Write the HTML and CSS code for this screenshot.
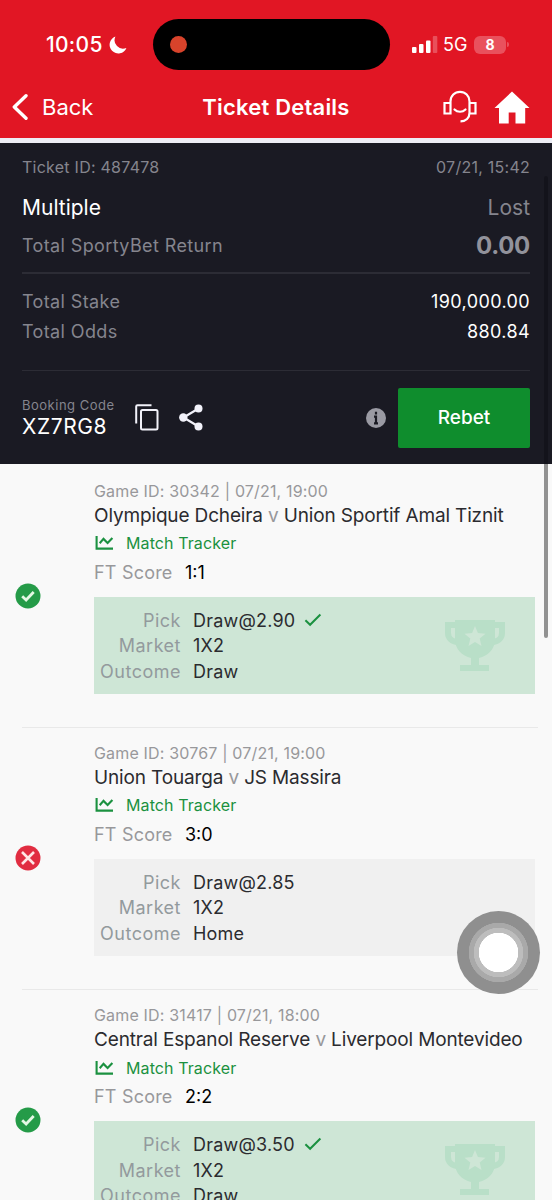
FILE: index.html
```html
<!DOCTYPE html>
<html lang="en">
<head>
<meta charset="utf-8">
<title>Ticket Details</title>
<link rel="stylesheet" href="styles.css">
</head>
<body>
<svg class="defs" aria-hidden="true">
  <symbol id="chart" viewBox="0 0 20 16"><path d="M2.600 1v12.600H19M5.700 8.200l3.800-4.300 4.100 4.200 4.800-5" fill="none" stroke="currentColor" stroke-width="2.100"/></symbol>
  <symbol id="won" viewBox="0 0 26 26"><circle cx="13" cy="13" r="12.5" fill="#259b48"/><path d="M7.200 13.200l3.900 3.800 7.600-8" fill="none" stroke="#e4f8e4" stroke-width="2.8"/></symbol>
  <symbol id="lost" viewBox="0 0 26 26"><circle cx="13" cy="13" r="12.5" fill="#e12d41"/><path d="M7 7l12 12M19 7L7 19" fill="none" stroke="#ffe6e6" stroke-width="2.6"/></symbol>
  <symbol id="tick" viewBox="0 0 18 14"><path d="M1.4 7.2l4.7 4.6L16.4 1.5" fill="none" stroke="currentColor" stroke-width="2"/></symbol>
  <symbol id="trophy" viewBox="0 0 62 54"><path d="M12 6H4v8c0 5 4 9 11 9M50 6h8v8c0 5-4 9-11 9" fill="none" stroke="currentColor" stroke-width="6"/><path d="M11 1h40v19c0 10-7 17-16 19v7h10v6H16v-6h11v-7c-9-2-16-9-16-19z" fill="currentColor"/><path class="star" d="M31 7l2.9 7.1 7.6.6-5.8 4.9 1.8 7.4-6.5-4-6.5 4 1.8-7.4-5.800-4.900 7.600-.6z"/></symbol>
</svg>
<header class="header">
  <div class="status">
    <div class="clock">
      <span class="time">10:05</span>
      <svg class="moon" viewBox="0 0 18 18"><path d="M6.400.6A8.700 8.700 0 1 0 17.400 12 8.500 8.500 0 0 1 6.400.6z" fill="#fff"/></svg>
    </div>
    <div class="island"><span class="record"></span></div>
    <div class="signal">
      <svg class="bars" viewBox="0 0 26 17"><g fill="#fff"><rect y="11" width="4.5" height="6" rx="1"/><rect x="7" y="8" width="4.5" height="9" rx="1"/><rect x="14" y="4.500" width="4.5" height="12.500" rx="1"/><rect x="20.800" width="4.500" height="17" rx="1" opacity=".25"/></g></svg>
      <span class="network">5G</span>
      <span class="battery">8</span><i class="cap"></i>
    </div>
  </div>
  <nav class="nav">
    <a class="back"><svg class="chevron" viewBox="0 0 16 26"><path d="M14 1.800L2.300 13 14 24.200" fill="none" stroke="#fff" stroke-width="3.400" stroke-linecap="round" stroke-linejoin="round"/></svg>Back</a>
    <h1 class="title">Ticket Details</h1>
    <div class="actions">
      <svg class="headset" viewBox="0 0 34 34"><g fill="none" stroke="#fff" stroke-width="2.200"><path d="M7.500 13H1.500v10.500h6zM26.500 13h6v10.500h-6zM7.500 13.500v-2.200a9.500 9.500 0 0 1 19 0v11.500c0 5-3.500 8.600-9 8.600"/><path d="M11.500 19.500c3 3 8 3 11 0" stroke-linecap="round"/></g></svg>
      <svg class="home" viewBox="0 0 36 33"><path d="M18 .5L.5 17H5v15.500h9.700V21.500h6.800v11h9.700V17h4.300z" fill="#fff"/></svg>
    </div>
  </nav>
</header>
<section class="ticket">
  <div class="row meta"><span>Ticket ID: 487478</span><span class="date">07/21, 15:42</span></div>
  <div class="row type"><span class="bright">Multiple</span><span>Lost</span></div>
  <div class="row return"><span>Total SportyBet Return</span><strong class="amount">0.00</strong></div>
  <div class="totals">
    <div class="row"><span>Total Stake</span><span class="num">190,000.00</span></div>
    <div class="row"><span>Total Odds</span><span class="num">880.84</span></div>
  </div>
  <div class="booking">
    <div class="code"><span class="code-label">Booking Code</span><span class="code-value">XZ7RG8</span></div>
    <svg class="copy" viewBox="0 0 24 27"><path d="M1.200 19.500V2.500q0-1.300 1.300-1.300H16.500" fill="none" stroke="#f2f2fa" stroke-width="2"/><rect x="6" y="6" width="16.500" height="19.500" rx="1.500" fill="none" stroke="#f2f2fa" stroke-width="2"/></svg>
    <svg class="share" viewBox="0 0 24 27"><path d="M19.500 4.500L4.500 13.500l15 9" fill="none" stroke="#f2f2fa" stroke-width="2.200"/><g fill="#f2f2fa"><circle cx="19.500" cy="4.500" r="4"/><circle cx="4.300" cy="13.500" r="4.200"/><circle cx="19.500" cy="22.500" r="4"/></g></svg>
    <svg class="info" viewBox="0 0 20 20"><circle cx="10" cy="10" r="10" fill="#9a9aa3"/><path d="M10 3.800v2.700M8 8.600h2v7M8 15.300h4" fill="none" stroke="#1a1a23" stroke-width="2.200"/></svg>
    <button class="rebet">Rebet</button>
  </div>
</section>
<main class="games">
  <article class="game">
    <svg class="badge"><use href="#won"/></svg>
    <div class="detail">
      <div class="game-id">Game ID: 30342 | 07/21, 19:00</div>
      <div class="teams">Olympique Dcheira <i>v</i> Union Sportif Amal Tiznit</div>
      <div class="tracker"><svg class="chart"><use href="#chart"/></svg>Match Tracker</div>
      <div class="score"><span>FT Score</span><b>1:1</b></div>
      <div class="bet win">
        <span class="label">Pick</span><span>Draw@2.90<svg class="tick"><use href="#tick"/></svg></span>
        <span class="label">Market</span><span>1X2</span>
        <span class="label">Outcome</span><span>Draw</span>
        <svg class="trophy"><use href="#trophy"/></svg>
      </div>
    </div>
  </article>
  <article class="game">
    <svg class="badge"><use href="#lost"/></svg>
    <div class="detail">
      <div class="game-id">Game ID: 30767 | 07/21, 19:00</div>
      <div class="teams">Union Touarga <i>v</i> JS Massira</div>
      <div class="tracker"><svg class="chart"><use href="#chart"/></svg>Match Tracker</div>
      <div class="score"><span>FT Score</span><b>3:0</b></div>
      <div class="bet">
        <span class="label">Pick</span><span>Draw@2.85</span>
        <span class="label">Market</span><span>1X2</span>
        <span class="label">Outcome</span><span>Home</span>
      </div>
    </div>
  </article>
  <article class="game">
    <svg class="badge"><use href="#won"/></svg>
    <div class="detail">
      <div class="game-id">Game ID: 31417 | 07/21, 18:00</div>
      <div class="teams">Central Espanol Reserve <i>v</i> Liverpool Montevideo</div>
      <div class="tracker"><svg class="chart"><use href="#chart"/></svg>Match Tracker</div>
      <div class="score"><span>FT Score</span><b>2:2</b></div>
      <div class="bet win">
        <span class="label">Pick</span><span>Draw@3.50<svg class="tick"><use href="#tick"/></svg></span>
        <span class="label">Market</span><span>1X2</span>
        <span class="label">Outcome</span><span>Draw</span>
        <svg class="trophy"><use href="#trophy"/></svg>
      </div>
    </div>
  </article>
</main>
<div class="scrollbar"></div>
<div class="assistive"></div>
</body>
</html>
```
FILE: styles.css
```css
* { box-sizing: border-box; }
body {
  position: relative;
  margin: 0;
  width: 552px;
  height: 1200px;
  overflow: hidden;
  background: #f9f9f9;
  font-family: Inter, "Liberation Sans", sans-serif;
  font-size: 18px;
  color: #2b2b2f;
}
svg { flex: none; }
.defs { position: absolute; width: 0; height: 0; }

.header { height: 143px; background: #e11624; border-bottom: 5px solid #ededf5; color: #fff; }
.status { display: flex; height: 77px; padding-top: 19px; }
.clock { display: flex; align-items: center; width: 153px; height: 51px; padding-left: 46px; }
.time { width: 63px; font-size: 21px; font-weight: 500; letter-spacing: 0.3px; }
.moon { width: 18px; height: 18px; }
.island { display: flex; align-items: center; width: 237px; height: 51px; padding-left: 17px; border-radius: 26px; background: #000; }
.record { width: 17px; height: 17px; border-radius: 50%; background: #d8432b; }
.signal { display: flex; align-items: center; height: 51px; padding-left: 22px; }
.bars { width: 26px; height: 17px; }
.network { width: 31px; margin-left: 5px; font-size: 18px; }
.battery { width: 32px; height: 18px; border-radius: 6px; background: #e9515d; font-size: 14px; font-weight: 700; line-height: 18px; text-align: center; }
.cap { width: 2px; height: 5px; margin-left: 1px; border-radius: 0 2px 2px 0; background: #e9515d; }

.nav { display: grid; grid-template-columns: 1fr auto 1fr; align-items: center; height: 60px; padding: 0 22px 0 12px; }
.back { display: flex; align-items: center; gap: 14px; font-size: 22px; }
.chevron { width: 16px; height: 26px; }
.title { margin: 0 -5px 0 5px; font-size: 22px; font-weight: 600; letter-spacing: 0.2px; }
.actions { display: flex; align-items: center; justify-content: flex-end; gap: 17px; }
.headset { width: 34px; height: 34px; }
.home { width: 36px; height: 33px; }

.ticket { height: 321px; padding: 11px 22px 0; background: #1a1a23; color: #85858e; letter-spacing: 0.38px; }
.row { display: flex; align-items: center; justify-content: space-between; height: 30px; }
.meta { height: 25px; font-size: 16px; letter-spacing: 0.25px; }
.type { height: 56px; font-size: 21px; letter-spacing: 0; }
.bright { color: #fff; }
.return { height: 20px; }
.amount { font-size: 24px; font-weight: 700; letter-spacing: -0.3px; color: #92929b; }
.totals { height: 99px; margin-top: 17px; padding-top: 12px; border: solid #2c2c35; border-width: 2px 0 1px; }
.num { color: #fff; }
.booking { display: flex; align-items: center; height: 93px; }
.code { display: flex; flex-direction: column; width: 113px; white-space: nowrap; }
.code-label { font-size: 13px; line-height: 17px; letter-spacing: 0.5px; }
.code-value { font-size: 21px; line-height: 25px; letter-spacing: 0.6px; color: #fff; }
.copy { width: 24px; height: 27px; }
.share { width: 24px; height: 27px; margin-left: 20px; }
.info { width: 20px; height: 20px; margin-left: auto; }
.rebet { width: 132px; height: 60px; margin-left: 12px; border: 0; border-radius: 2px; background: #0f8d2d; color: #fff; font: 500 19px Inter, sans-serif; }

.games { padding: 1.5px 16px 0 14.5px; }
.game { display: flex; align-items: center; height: 262.3px; }
.badge { width: 26px; height: 26px; margin-bottom: 2px; }
.detail { align-self: flex-start; width: 441px; margin-left: 53.5px; padding-top: 15px; white-space: nowrap; }
.game-id { font-size: 16px; line-height: 20px; letter-spacing: 0.17px; color: #98989b; }
.teams { height: 28px; font-size: 19px; line-height: 29px; letter-spacing: -0.15px; }
.teams i { font-style: normal; color: #98989b; }
.tracker { display: flex; align-items: center; gap: 12px; height: 29px; font-size: 16px; letter-spacing: 0.1px; color: #1b9140; }
.chart { width: 20px; height: 16px; }
.score { display: flex; height: 29px; font-size: 18px; line-height: 30px; color: #98989b; }
.score span { width: 91px; letter-spacing: 0.2px; }
.score b { font-weight: 400; color: #000; }
.bet { position: relative; display: grid; grid-template-columns: 87px 1fr; grid-auto-rows: 25.5px; column-gap: 12px; height: 97px; margin-top: 10px; padding-top: 11px; line-height: 25.5px; letter-spacing: 0.2px; background: #f0f0f0; }
.win { background: #cee6d6; }
.label { text-align: right; letter-spacing: 0.5px; color: #939a9d; }
.tick { width: 18px; height: 14px; margin-left: 9px; color: #1b9140; }
.trophy { position: absolute; right: 29px; top: 22px; width: 62px; height: 54px; color: #b9dfc8; }
.star { fill: #cee6d6; }

.game + .game { position: relative; }
.game + .game::before { content: ""; position: absolute; left: 7.5px; right: -2px; top: -1px; height: 1px; background: #e9e9e9; }
.scrollbar { position: absolute; left: 544px; top: 176px; width: 4px; height: 462px; border-radius: 2px; background: linear-gradient(#13131b 288px, #929292 288px); }
.assistive { position: absolute; left: 457px; top: 911px; width: 83px; height: 83px; border-radius: 50%; background: radial-gradient(circle, #fff 0 19.5px, #bdbdbd 20px 24.500px, #a9a9a9 25px 29.500px, #8f8f8f 30px); }
```
